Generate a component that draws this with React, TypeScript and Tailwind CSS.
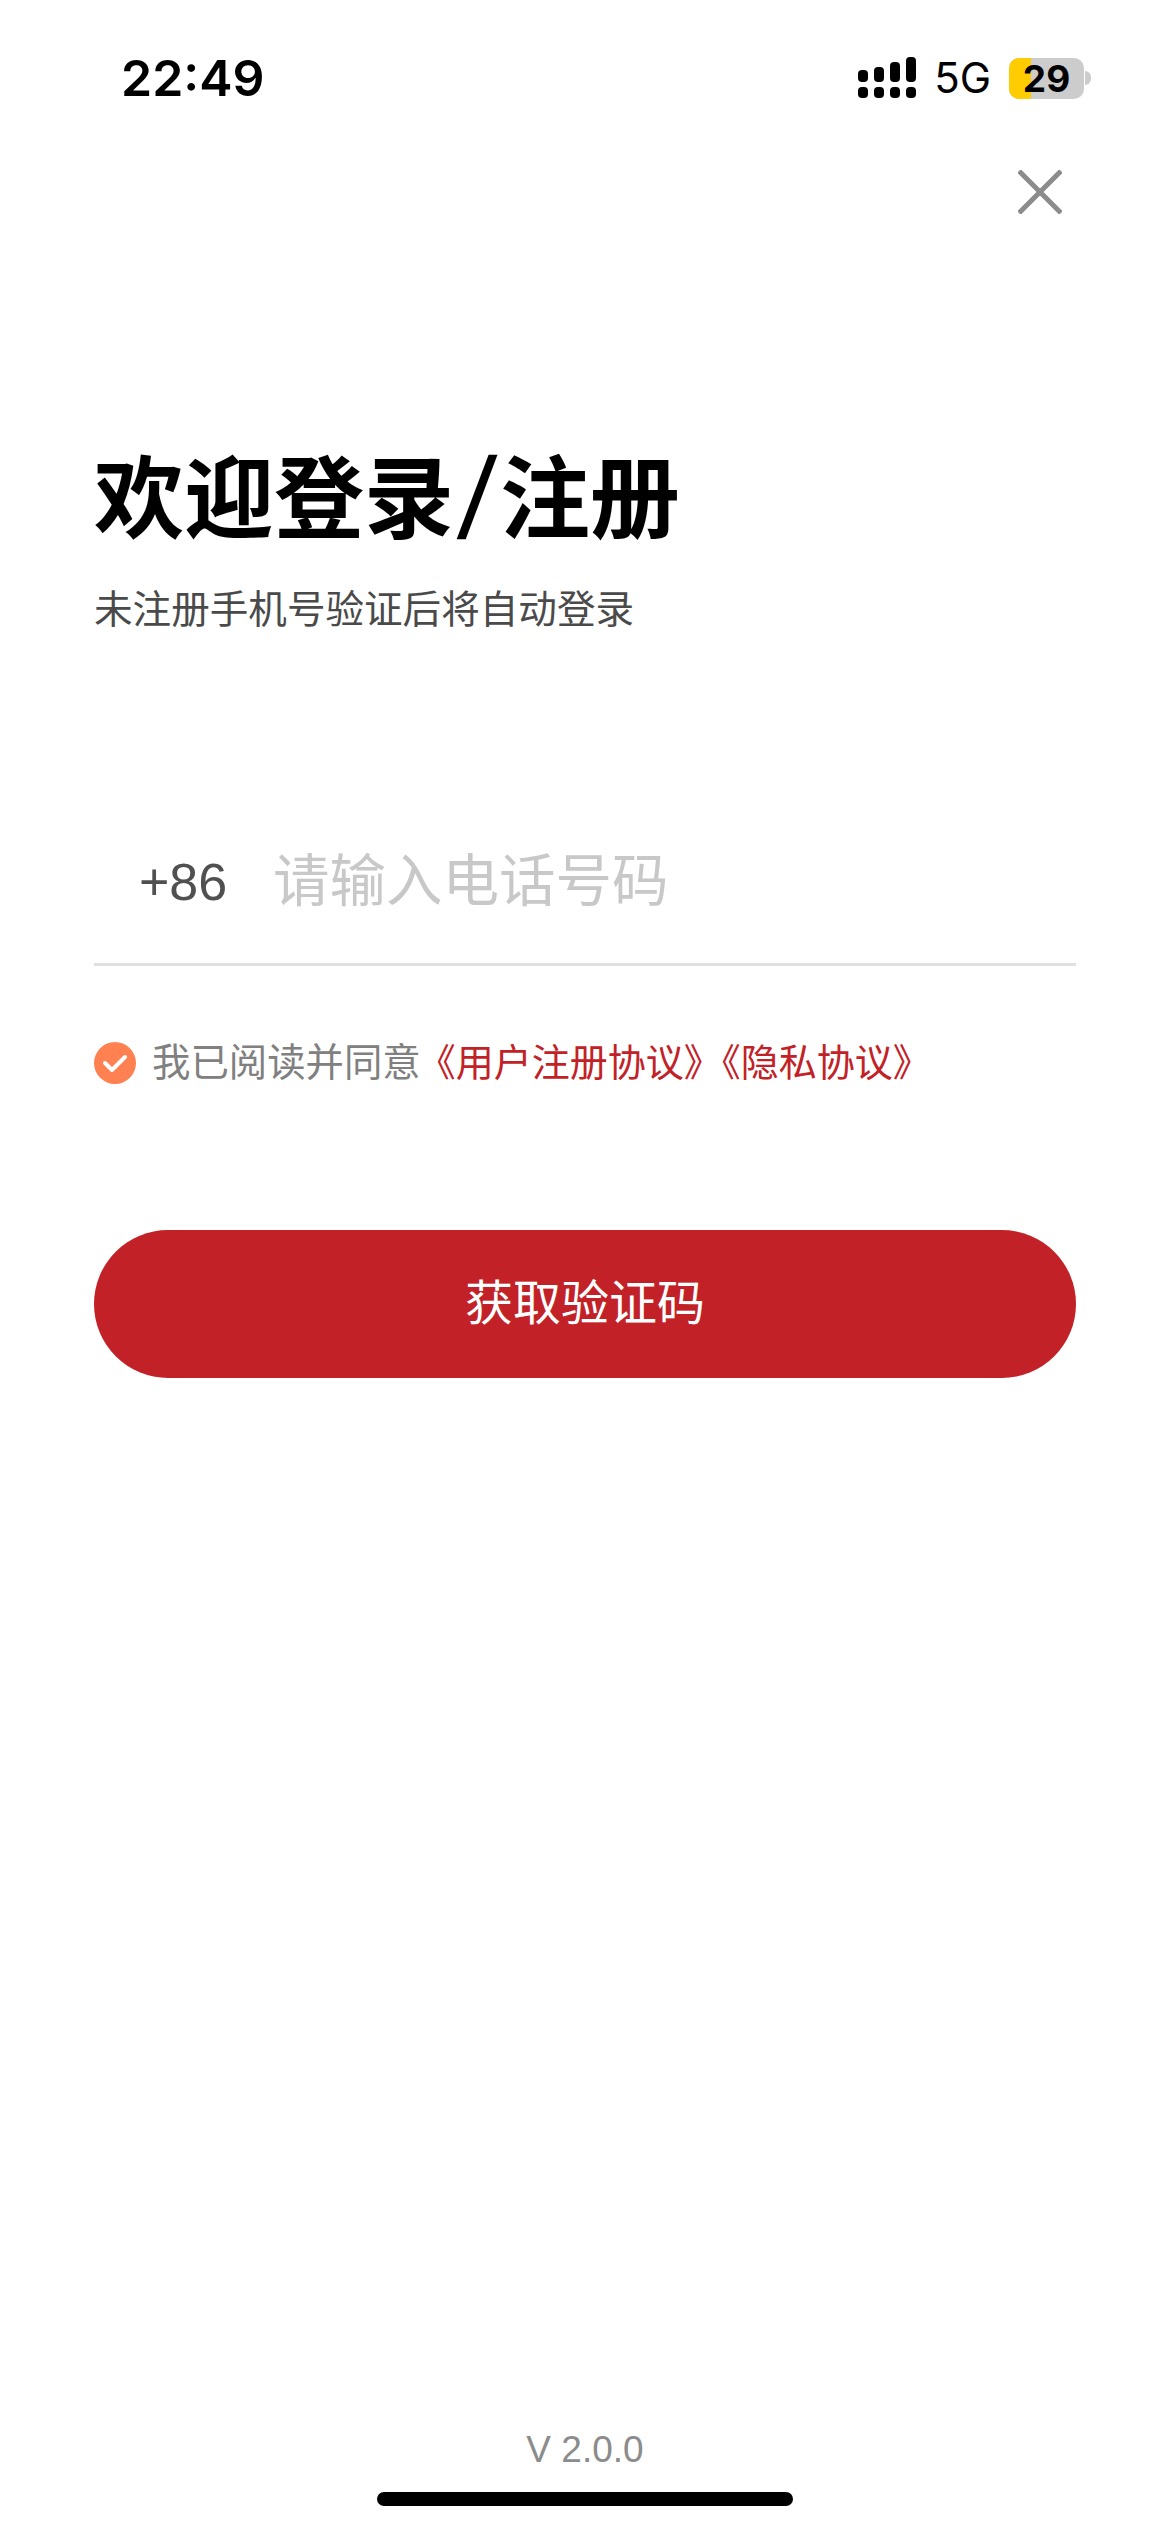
const cjk = { fontFamily: '"Liberation Sans", "Noto Sans CJK SC", sans-serif' }

function SignalIcon() {
  return (
    <svg width="58" height="42" viewBox="0 0 58 42" fill="#000">
      <rect x="0" y="13" width="10" height="12" rx="4" />
      <rect x="16" y="10" width="10" height="15" rx="4" />
      <rect x="32" y="5" width="10" height="20" rx="4" />
      <rect x="48" y="0" width="10" height="25" rx="4" />
      <rect x="0" y="30" width="10" height="11" rx="4" />
      <rect x="16" y="30" width="10" height="11" rx="4" />
      <rect x="32" y="30" width="10" height="11" rx="4" />
      <rect x="48" y="30" width="10" height="11" rx="4" />
    </svg>
  )
}

function Battery() {
  return (
    <div className="flex items-center">
      <div className="relative w-[75px] h-[41px] rounded-[10px] bg-[#cccccc]">
        <div className="h-full w-[22px] rounded-l-[10px] bg-[#ffcc00]" />
        <span className="absolute inset-0 text-center text-[37px] leading-[41px] font-bold text-black font-['Inter']">29</span>
      </div>
      <div className="w-[6px] h-[14px] ml-[1px] rounded-r-full bg-[#cccccc]" />
    </div>
  )
}

export default function App() {
  return (
    <div className="w-[1170px] h-[2532px] bg-white flex flex-col" style={cjk}>
      <div className="h-[138px] pl-[121px] pr-[79px] pt-[48px] flex justify-between items-start">
        <span className="text-[50px] leading-[60px] font-semibold text-black font-['Inter']">22:49</span>
        <div className="flex items-center gap-[18px] pt-[9px]">
          <SignalIcon />
          <span className="text-[42px] leading-[42px] text-black font-['Inter']">5G</span>
          <Battery />
        </div>
      </div>

      <div className="flex justify-end pr-[108px] mt-[32px]">
        <svg width="44" height="44" viewBox="0 0 44 44" stroke="#8c8c8c" strokeWidth="5">
          <path d="M1 1 L43 43 M43 1 L1 43" />
        </svg>
      </div>

      <div className="px-[94px] flex flex-col flex-1">
        <h1 className="mt-[228px] text-[90px] leading-[100px] font-bold text-black font-['Noto_Sans_CJK_SC']">
          欢迎登录<span className="inline-block mx-[7px] align-[-7px] text-[115px] leading-[0] font-normal font-['Liberation_Sans'] skew-x-[-6deg]">/</span>注册
        </h1>
        <p className="mt-[43px] text-[38.6px] leading-[50px] text-[#4a4a4a]">未注册手机号验证后将自动登录</p>

        <div className="mt-[212px] h-[119px] border-b-[3px] border-[#e0e0e0] flex items-start pl-[45px]">
          <span className="w-[134px] text-[52px] leading-[70px] text-[#505050]">+86</span>
          <span className="text-[56.5px] leading-[70px] text-[#c8c8c8]">请输入电话号码</span>
        </div>

        <div className="mt-[72px] flex items-center">
          <div className="w-[42px] h-[42px] rounded-full bg-[#ff8050] flex items-center justify-center">
            <svg width="26" height="20" viewBox="0 0 26 20" fill="none" stroke="#fff" strokeWidth="4" strokeLinecap="round" strokeLinejoin="round">
              <path d="M3 10 L10 17 L23 4" />
            </svg>
          </div>
          <span className="ml-[16px] text-[38.4px] leading-[50px] text-[#808080]">我已阅读并同意</span>
          <span className="ml-[-3px] text-[38px] leading-[50px] text-[#c22227]">《用户注册协议》《隐私协议》</span>
        </div>

        <button className="mt-[142px] h-[148px] rounded-[74px] bg-[#c22227] text-white text-[48px]">获取验证码</button>

        <div className="mt-auto text-center text-[37px] leading-[44px] text-[#8c8c8c]">V 2.0.0</div>
        <div className="mt-[20px] mb-[26px] mx-auto w-[416px] h-[14px] rounded-full bg-black" />
      </div>
    </div>
  )
}
